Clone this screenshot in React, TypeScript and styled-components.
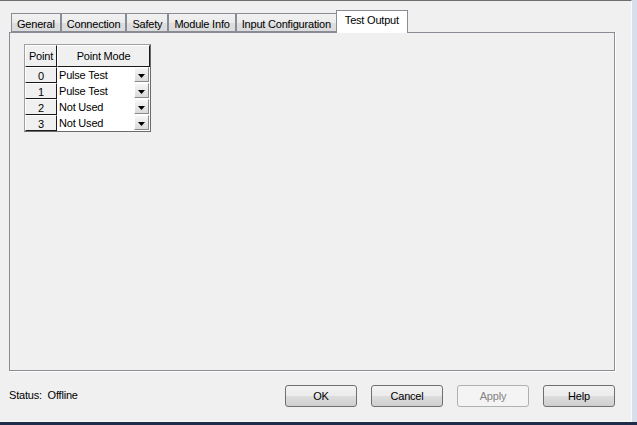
import React from "react";
import styled, { createGlobalStyle } from "styled-components";

const GlobalStyle = createGlobalStyle`
  html, body {
    margin: 0;
    padding: 0;
    background: #f0f0f0;
  }
  body {
    font-family: "Liberation Sans", Arial, sans-serif;
    font-size: 11px;
    letter-spacing: -0.2px;
    color: #000;
  }
`;

const Screen = styled.div`
  width: 637px;
  height: 425px;
  display: flex;
  flex-direction: column;
  overflow: hidden;
`;

const Upper = styled.div`
  flex: 1;
  display: flex;
  min-height: 0;
`;

const Dialog = styled.div`
  flex: 1;
  display: flex;
  flex-direction: column;
  background: #f0f0f0;
  border-top: 1px solid #6e6e6e;
  border-right: 1px solid #fafafa;
  border-bottom: 1px solid #fafafa;
`;

const FrameRight = styled.div`
  width: 5px;
  background: #d7dfec;
`;

const FrameBottom = styled.div`
  height: 3px;
  background: #1f2d4a;
`;

const TabStrip = styled.div`
  display: flex;
  align-items: flex-end;
  padding-left: 11px;
  margin-top: 9px;
  height: 22px;
  position: relative;
  z-index: 1;
`;

const Tab = styled.div<{ $active?: boolean }>`
  box-sizing: border-box;
  height: ${(p) => (p.$active ? "23px" : "19px")};
  padding: ${(p) => (p.$active ? "3px 8px 0" : "4px 5px 0")};
  margin: ${(p) => (p.$active ? "0 -1px -1px -1px" : "0")};
  border: 1px solid #898c95;
  border-bottom: ${(p) => (p.$active ? "none" : "1px solid #898c95")};
  background: ${(p) =>
    p.$active ? "#ffffff" : "linear-gradient(#f2f2f2, #ebebeb 50%, #dedede 51%, #dbdbdb)"};
  white-space: nowrap;
  line-height: 13px;
`;

const Panel = styled.div`
  box-sizing: border-box;
  margin: 0 16px 0 9px;
  height: 339px;
  border: 1px solid #898c95;
  box-shadow: 1px 1px 0 #ffffff;
  background: #f0f0f0;
  padding: 11px 14px;
`;

const Grid = styled.div`
  display: inline-grid;
  grid-template-columns: 32px 93px;
  grid-template-rows: 22px repeat(4, 16px);
  border-top: 1px solid #a0a0a0;
  border-left: 1px solid #a0a0a0;
  border-right: 1px solid #6b6b6b;
  border-bottom: 1px solid #6b6b6b;
  background: #ffffff;
`;

const HeadCell = styled.div`
  box-sizing: border-box;
  display: flex;
  align-items: center;
  justify-content: center;
  background: #f0f0f0;
  border-top: 1px solid #ffffff;
  border-left: 1px solid #ffffff;
  border-right: 1px solid #1a1a1a;
  border-bottom: 1px solid #1a1a1a;
`;

const IndexCell = styled.div`
  box-sizing: border-box;
  display: flex;
  align-items: center;
  justify-content: center;
  background: #f0f0f0;
  border-top: 1px solid #ffffff;
  border-left: 1px solid #ffffff;
  border-right: 1px solid #1a1a1a;
  border-bottom: 1px solid #1a1a1a;
  padding-top: 1px;
`;

const ModeCell = styled.div`
  box-sizing: border-box;
  display: flex;
  align-items: center;
  background: #ffffff;
  border-bottom: 1px solid #ffffff;
  padding-left: 2px;
`;

const ModeText = styled.span`
  flex: 1;
`;

const DropButton = styled.div`
  box-sizing: border-box;
  width: 15px;
  height: 15px;
  margin-right: 1px;
  display: flex;
  align-items: flex-end;
  justify-content: center;
  padding-bottom: 3px;
  background: linear-gradient(#f6f6f6, #dadada);
  border-top: 1px solid #ffffff;
  border-left: 1px solid #ffffff;
  border-right: 1px solid #8a8a8a;
  border-bottom: 1px solid #8a8a8a;
`;

const Footer = styled.div`
  flex: 1;
  display: flex;
  align-items: center;
  padding: 0 16px 0 9px;
`;

const Status = styled.div`
  flex: 1;
  white-space: pre;
  padding-bottom: 2px;
`;

const Buttons = styled.div`
  display: flex;
  gap: 14px;
  padding-bottom: 1px;
`;

const Button = styled.button`
  box-sizing: border-box;
  width: 72px;
  height: 22px;
  padding: 0;
  font: inherit;
  letter-spacing: inherit;
  color: #000;
  border: 1px solid #707070;
  border-radius: 3px;
  background: linear-gradient(#f2f2f2, #ebebeb 50%, #dddddd 51%, #cfcfcf);
  &:disabled {
    color: #838383;
    border-color: #adb2b5;
    background: #f4f4f4;
  }
`;

const Arrow = () => (
  <svg width="7" height="4" viewBox="0 0 7 4">
    <path d="M0 0 H7 L3.5 4 Z" fill="#000" />
  </svg>
);

const tabs = ["General", "Connection", "Safety", "Module Info", "Input Configuration", "Test Output"];

const points = [
  { id: 0, mode: "Pulse Test" },
  { id: 1, mode: "Pulse Test" },
  { id: 2, mode: "Not Used" },
  { id: 3, mode: "Not Used" },
];

export default function App() {
  return (
    <>
      <GlobalStyle />
      <Screen>
        <Upper>
          <Dialog>
            <TabStrip>
              {tabs.map((t) => (
                <Tab key={t} $active={t === "Test Output"}>
                  {t}
                </Tab>
              ))}
            </TabStrip>
            <Panel>
              <Grid>
                <HeadCell>Point</HeadCell>
                <HeadCell>Point Mode</HeadCell>
                {points.map((p) => (
                  <React.Fragment key={p.id}>
                    <IndexCell>{p.id}</IndexCell>
                    <ModeCell>
                      <ModeText>{p.mode}</ModeText>
                      <DropButton>
                        <Arrow />
                      </DropButton>
                    </ModeCell>
                  </React.Fragment>
                ))}
              </Grid>
            </Panel>
            <Footer>
              <Status>{"Status:  Offline"}</Status>
              <Buttons>
                <Button>OK</Button>
                <Button>Cancel</Button>
                <Button disabled>Apply</Button>
                <Button>Help</Button>
              </Buttons>
            </Footer>
          </Dialog>
          <FrameRight />
        </Upper>
        <FrameBottom />
      </Screen>
    </>
  );
}
